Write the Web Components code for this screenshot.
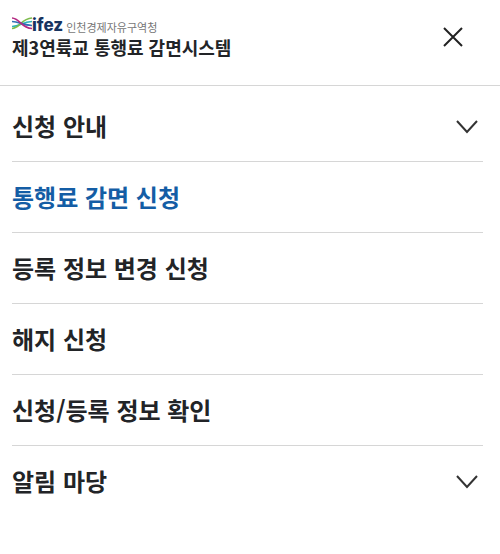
<!DOCTYPE html>
<html lang="ko">
<head>
    <meta charset="UTF-8">
    <meta name="viewport" content="width=device-width, initial-scale=1.0">
    <title>제3연륙교 통행료 감면시스템</title>
    <style>
        body {
            margin: 0;
            background-color: #fff;
            color: #222427;
            font-family: "Noto Sans CJK KR", sans-serif;
        }
    </style>
</head>
<body>
    <mobile-menu>
        <site-brand slot="brand">제3연륙교 통행료 감면시스템</site-brand>
        <menu-item expandable>신청 안내</menu-item>
        <menu-item current>통행료 감면 신청</menu-item>
        <menu-item>등록 정보 변경 신청</menu-item>
        <menu-item>해지 신청</menu-item>
        <menu-item>신청/등록 정보 확인</menu-item>
        <menu-item expandable>알림 마당</menu-item>
    </mobile-menu>

    <script>
        class SiteBrand extends HTMLElement {
            constructor() {
                super();
                this.attachShadow({ mode: 'open' });
            }

            connectedCallback() {
                this.shadowRoot.innerHTML = `
                    <style>
                        :host {
                            display: block;
                        }

                        a {
                            display: block;
                            color: inherit;
                            text-decoration: none;
                        }

                        .agency {
                            display: flex;
                            align-items: center;
                            height: 20px;
                        }

                        .mark {
                            width: 20px;
                            height: 14px;
                            margin-bottom: 4px;
                        }

                        .wordmark {
                            color: #17335f;
                            font: 800 17px/20px Inter, sans-serif;
                        }

                        .agency-name {
                            margin: 3px 0 0 3px;
                            color: #777;
                            font-size: 11px;
                            line-height: 16px;
                        }

                        .title {
                            display: block;
                            font-size: 18px;
                            font-weight: 700;
                            line-height: 24px;
                        }
                    </style>

                    <a href="#">
                        <span class="agency">
                            <svg class="mark" viewBox="0 0 20 14" fill="none" stroke-width="1.700" aria-hidden="true">
                                <path stroke="#2bb3b8" d="M0 10.500C8 10.500 10 6 20 5.500"/>
                                <path stroke="#7dbb4c" d="M0 12.500C8 12.500 9 2.500 20 2"/>
                                <path stroke="#2f6fb5" d="M0 5.500C7 5.500 10 9 20 9.500"/>
                                <path stroke="#b52a83" d="M0 2C8 2.500 9 12 20 12.500"/>
                            </svg>
                            <span class="wordmark">ifez</span>
                            <span class="agency-name">인천경제자유구역청</span>
                        </span>
                        <span class="title"><slot></slot></span>
                    </a>
                `;
            }
        }

        class MenuItem extends HTMLElement {
            constructor() {
                super();
                this.attachShadow({ mode: 'open' });
            }

            connectedCallback() {
                const expandable = this.hasAttribute('expandable');
                const current = this.hasAttribute('current');

                this.shadowRoot.innerHTML = `
                    <style>
                        :host {
                            display: block;
                            border-bottom: 1px solid #d6d6d6;
                        }

                        :host(:last-of-type) {
                            border-bottom: 0;
                        }

                        :host([current]) {
                            color: #145da5;
                        }

                        a,
                        button {
                            box-sizing: border-box;
                            display: flex;
                            align-items: center;
                            justify-content: space-between;
                            width: 100%;
                            margin: 0;
                            padding: 17px 4px 17px 0;
                            border: 0;
                            background: none;
                            color: inherit;
                            font-family: inherit;
                            font-size: 24px;
                            font-weight: 700;
                            line-height: 36px;
                            text-align: left;
                            text-decoration: none;
                        }

                        button {
                            cursor: pointer;
                        }

                        svg {
                            width: 24px;
                            height: 24px;
                        }
                    </style>

                    ${expandable ? `
                        <button type="button" aria-expanded="false">
                            <slot></slot>
                            <svg viewBox="0 0 24 24" fill="none" stroke="#333" stroke-width="2" aria-hidden="true">
                                <path d="M2 7L12 18L22 7"/>
                            </svg>
                        </button>
                    ` : `
                        <a href="#" ${current ? 'aria-current="page"' : ''}><slot></slot></a>
                    `}
                `;
            }
        }

        class MobileMenu extends HTMLElement {
            constructor() {
                super();
                this.attachShadow({ mode: 'open' });
            }

            connectedCallback() {
                this.shadowRoot.innerHTML = `
                    <style>
                        :host {
                            display: block;
                        }

                        header {
                            display: flex;
                            align-items: flex-start;
                            justify-content: space-between;
                            padding: 15px 32px 26px 12px;
                            border-bottom: 1px solid #d6d6d6;
                        }

                        .close {
                            display: flex;
                            padding: 10px 3px;
                            border: 0;
                            background: none;
                            cursor: pointer;
                        }

                        .close svg {
                            width: 24px;
                            height: 24px;
                        }

                        nav {
                            padding: 5px 17px 5px 12px;
                        }
                    </style>

                    <header>
                        <slot name="brand"></slot>
                        <button class="close" type="button" aria-label="메뉴 닫기">
                            <svg viewBox="0 0 24 24" fill="none" stroke="#222" stroke-width="2" aria-hidden="true">
                                <path d="M3 3L21 21M21 3L3 21"/>
                            </svg>
                        </button>
                    </header>
                    <nav><slot></slot></nav>
                `;
            }
        }

        customElements.define('site-brand', SiteBrand);
        customElements.define('menu-item', MenuItem);
        customElements.define('mobile-menu', MobileMenu);
    </script>
</body>
</html>
